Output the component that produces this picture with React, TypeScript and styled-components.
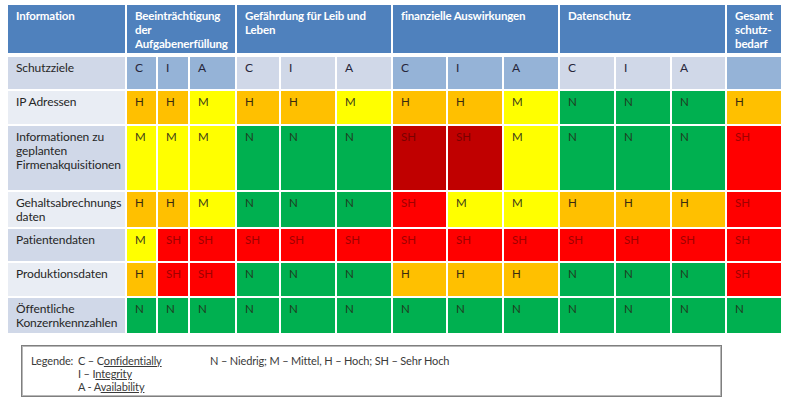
import styled, { createGlobalStyle } from 'styled-components';

type Level = 'N' | 'M' | 'H' | 'SH' | 'XH';

const GlobalStyle = createGlobalStyle`
  html, body {
    margin: 0;
    padding: 0;
    background: #ffffff;
  }
  body {
    font-family: Lato, "Open Sans", "Liberation Sans", sans-serif;
  }
`;

const groups = [
  { title: 'Information', span: 1 },
  { title: 'Beeinträchtigung der Aufgabenerfüllung', span: 3 },
  { title: 'Gefährdung für Leib und Leben', span: 3 },
  { title: 'finanzielle Auswirkungen', span: 3 },
  { title: 'Datenschutz', span: 3 },
  { title: 'Gesamt schutz-bedarf', span: 1 },
];

// background of the C/I/A cells in the "Schutzziele" row, by group
const goalShades = ['#95b3d7', '#d0d8e8', '#95b3d7', '#d0d8e8'];

const rows: { label: string; values: Level[] }[] = [
  { label: 'IP Adressen', values: ['H', 'H', 'M', 'H', 'H', 'M', 'H', 'H', 'M', 'N', 'N', 'N', 'H'] },
  {
    label: 'Informationen zu geplanten Firmenakquisitionen',
    values: ['M', 'M', 'M', 'N', 'N', 'N', 'XH', 'XH', 'M', 'N', 'N', 'N', 'SH'],
  },
  { label: 'Gehaltsabrechnungs daten', values: ['H', 'H', 'M', 'N', 'N', 'N', 'SH', 'M', 'M', 'H', 'H', 'H', 'SH'] },
  { label: 'Patientendaten', values: ['M', 'SH', 'SH', 'SH', 'SH', 'SH', 'SH', 'SH', 'SH', 'SH', 'SH', 'SH', 'SH'] },
  { label: 'Produktionsdaten', values: ['H', 'SH', 'SH', 'N', 'N', 'N', 'H', 'H', 'H', 'N', 'N', 'N', 'SH'] },
  { label: 'Öffentliche Konzernkennzahlen', values: ['N', 'N', 'N', 'N', 'N', 'N', 'N', 'N', 'N', 'N', 'N', 'N', 'N'] },
];

const levelColors: Record<Level, { bg: string; fg: string }> = {
  N: { bg: '#00b050', fg: '#1f3a1f' },
  M: { bg: '#ffff00', fg: '#3a3a1a' },
  H: { bg: '#ffc000', fg: '#3a2a10' },
  SH: { bg: '#ff0000', fg: '#a00000' },
  XH: { bg: '#c00000', fg: '#7a0000' },
};

export default function App() {
  return (
    <Page>
      <GlobalStyle />
      <Matrix>
        {groups.map((g) => (
          <HeadCell key={g.title} $span={g.span}>
            {g.title}
          </HeadCell>
        ))}

        <LabelCell $shade="dark">Schutzziele</LabelCell>
        {goalShades.map((shade, gi) =>
          ['C', 'I', 'A'].map((goal) => (
            <GoalCell key={`${gi}-${goal}`} $bg={shade}>
              {goal}
            </GoalCell>
          ))
        )}
        <GoalCell $bg="#95b3d7" />

        {rows.map((row, ri) => (
          <Row key={row.label} label={row.label} values={row.values} light={ri % 2 === 0} />
        ))}
      </Matrix>

      <Legend>
        <LegendLabel>Legende:</LegendLabel>
        <LegendKeys>
          <span>
            C – C<Underlined>onfidentially</Underlined>
          </span>
          <span>
            I – I<Underlined>ntegrity</Underlined>
          </span>
          <span>
            A - A<Underlined>vailability</Underlined>
          </span>
        </LegendKeys>
        <LegendLevels>N – Niedrig; M – Mittel, H – Hoch; SH – Sehr Hoch</LegendLevels>
      </Legend>
    </Page>
  );
}

function Row({ label, values, light }: { label: string; values: Level[]; light: boolean }) {
  return (
    <>
      <LabelCell $shade={light ? 'light' : 'dark'}>{label}</LabelCell>
      {values.map((v, i) => (
        <ValueCell key={i} $level={v}>
          {v === 'XH' ? 'SH' : v}
        </ValueCell>
      ))}
    </>
  );
}

const Page = styled.div`
  padding: 5px 8px 0;
  width: 800px;
  box-sizing: border-box;
`;

const Matrix = styled.div`
  display: grid;
  width: 773px;
  grid-template-columns: 117px 29px 30px 45px 42px 54px 54px 53px 54px 54px 54px 54px 53px 54px;
  grid-template-rows: 50px 32px 33px 64px 35px 32px 33px 35px;
  column-gap: 2px;
  row-gap: 2px;
`;

const Cell = styled.div`
  box-sizing: border-box;
  padding: 4px 3px 0 8px;
  font-size: 12px;
  line-height: 14px;
`;

const HeadCell = styled(Cell)<{ $span: number }>`
  grid-column: span ${(p) => p.$span};
  margin-bottom: 2px;
  background: #4f81bd;
  color: #ffffff;
  font-size: 11.5px;
  font-weight: 700;
  letter-spacing: -0.15px;
  padding-right: 2px;
`;

const LabelCell = styled(Cell)<{ $shade: 'light' | 'dark' }>`
  background: ${(p) => (p.$shade === 'light' ? '#e9edf4' : '#d0d8e8')};
  color: #262626;
  letter-spacing: -0.1px;
`;

const GoalCell = styled(Cell)<{ $bg: string }>`
  background: ${(p) => p.$bg};
  color: #26263a;
`;

const ValueCell = styled(Cell)<{ $level: Level }>`
  background: ${(p) => levelColors[p.$level].bg};
  color: ${(p) => levelColors[p.$level].fg};
  font-size: 11.5px;
`;

const Legend = styled.div`
  display: flex;
  margin: 12px 0 0 13px;
  width: 701px;
  height: 52px;
  box-sizing: border-box;
  border: 1px solid #7f7f7f;
  box-shadow: inset 0 0 0 1px #b8b8b8;
  padding: 8px 0 0 9px;
  font-size: 11px;
  line-height: 13px;
  letter-spacing: -0.15px;
  color: #3a3a3a;
`;

const LegendLabel = styled.div`
  width: 47px;
`;

const LegendKeys = styled.div`
  display: flex;
  flex-direction: column;
  width: 132px;
`;

const LegendLevels = styled.div``;

const Underlined = styled.span`
  text-decoration: underline;
`;
